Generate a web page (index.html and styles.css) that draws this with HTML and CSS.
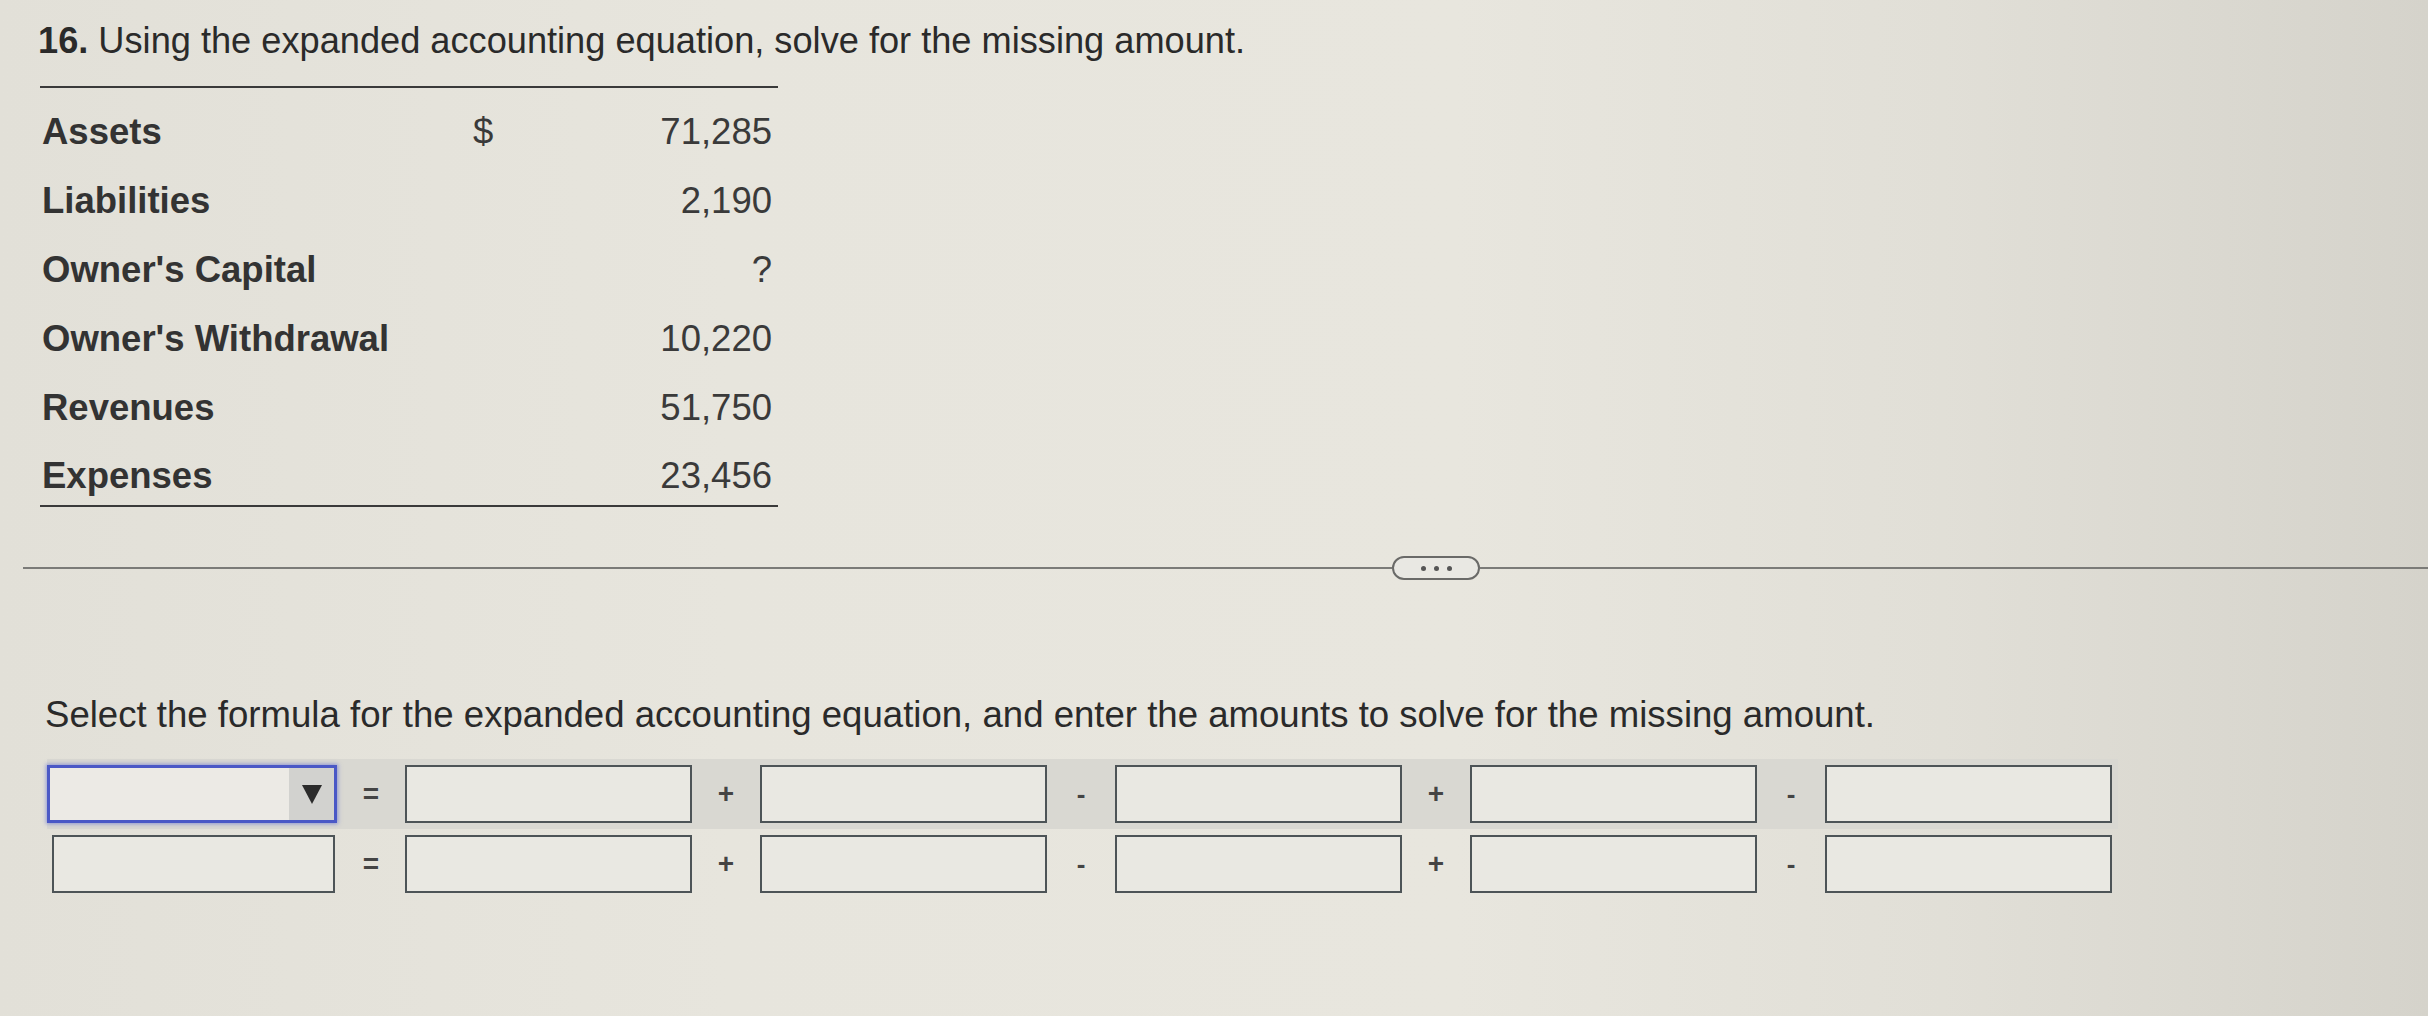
FILE: index.html
```html
<!DOCTYPE html>
<html lang="en">
<head>
<meta charset="utf-8">
<title>Expanded accounting equation</title>
<link rel="stylesheet" href="styles.css">
</head>
<body>
<div class="page">
  <h1 class="title"><b>16.</b> Using the expanded accounting equation, solve for the missing amount.</h1>

  <div class="data">
    <div class="row"><span class="label">Assets</span><span class="cur">$</span><span class="val">71,285</span></div>
    <div class="row"><span class="label">Liabilities</span><span class="cur"></span><span class="val">2,190</span></div>
    <div class="row"><span class="label">Owner's Capital</span><span class="cur"></span><span class="val">?</span></div>
    <div class="row"><span class="label">Owner's Withdrawal</span><span class="cur"></span><span class="val">10,220</span></div>
    <div class="row"><span class="label">Revenues</span><span class="cur"></span><span class="val">51,750</span></div>
    <div class="row last"><span class="label">Expenses</span><span class="cur"></span><span class="val">23,456</span></div>
  </div>

  <div class="sep">
    <span class="sep-line short"></span>
    <span class="more"><i></i><i></i><i></i></span>
    <span class="sep-line"></span>
  </div>

  <p class="instr">Select the formula for the expanded accounting equation, and enter the amounts to solve for the missing amount.</p>

  <div class="formula">
    <div class="frow band">
      <div class="select"><span class="sel-field"></span><span class="sel-btn"><span class="tri"></span></span></div>
      <span class="op">=</span>
      <span class="box"></span>
      <span class="op">+</span>
      <span class="box"></span>
      <span class="op dash">-</span>
      <span class="box"></span>
      <span class="op">+</span>
      <span class="box"></span>
      <span class="op dash">-</span>
      <span class="box"></span>
    </div>
    <div class="frow">
      <span class="box first"></span>
      <span class="op">=</span>
      <span class="box"></span>
      <span class="op">+</span>
      <span class="box"></span>
      <span class="op dash">-</span>
      <span class="box"></span>
      <span class="op">+</span>
      <span class="box"></span>
      <span class="op dash">-</span>
      <span class="box"></span>
    </div>
  </div>
</div>
</body>
</html>
```

FILE: styles.css
```css
html, body {
  margin: 0;
  padding: 0;
}

body {
  width: 2428px;
  height: 1016px;
  overflow: hidden;
  background: linear-gradient(90deg, #e2e0d8 0%, #e7e5dd 30%, #e8e6de 60%, #e1dfd7 80%, #d5d3cb 100%);
  font-family: "Liberation Sans", Arial, sans-serif;
  color: #2c2c2c;
}

.page {
  padding-top: 21px;
}

.title {
  margin: 0 0 0 38px;
  font-size: 36.2px;
  line-height: 40px;
  font-weight: normal;
  color: #2a2a2a;
}

.title b {
  font-weight: bold;
}

.data {
  margin: 25px 0 0 40px;
  width: 738px;
  box-sizing: border-box;
  border-top: 2px solid #3a3a3a;
  border-bottom: 2px solid #3a3a3a;
  padding: 9px 6px 0 2px;
}

.row {
  display: grid;
  grid-template-columns: 431px 40px 1fr;
  height: 69px;
  align-items: center;
  font-size: 36.5px;
  line-height: 40px;
}

.row.last {
  height: 63px;
  align-items: start;
  padding-top: 14px;
  box-sizing: border-box;
}

.label {
  font-weight: bold;
  color: #333;
}

.cur {
  color: #3a3a3a;
}

.val {
  text-align: right;
  color: #3a3a3a;
}

.sep {
  display: flex;
  align-items: center;
  margin: 49px 0 0 23px;
  height: 24px;
}

.sep-line {
  flex: 1;
  height: 2px;
  background: #7b7b78;
}

.sep-line.short {
  flex: 0 0 1369px;
}

.more {
  width: 88px;
  height: 24px;
  box-sizing: border-box;
  border: 2.5px solid #6a6a68;
  border-radius: 12px;
  background: #e9e8e3;
  display: flex;
  align-items: center;
  justify-content: center;
  gap: 8px;
}

.more i {
  display: block;
  width: 5px;
  height: 5px;
  border-radius: 50%;
  background: #555;
}

.instr {
  margin: 115px 0 0 45px;
  font-size: 36.6px;
  line-height: 40px;
  color: #2a2a2a;
}

.formula {
  margin: 24px 0 0 47px;
  display: flex;
  flex-direction: column;
  gap: 6px;
}

.frow {
  display: grid;
  grid-template-columns: 290px 68px 287px 68px 287px 68px 287px 68px 287px 68px 287px;
  align-items: center;
  width: 2071px;
  height: 58px;
}

.frow.band {
  background: #d9d8d2;
  padding: 6px 0;
}

.box {
  display: block;
  height: 58px;
  box-sizing: border-box;
  border: 2px solid #4d5457;
  background: #e9e8e2;
}

.box.first {
  margin-left: 5px;
  width: 283px;
}

.op {
  text-align: center;
  font-size: 28px;
  line-height: 30px;
  color: #444;
  font-weight: bold;
}

.op.dash {
  font-size: 26px;
}

.select {
  height: 58px;
  box-sizing: border-box;
  border: 3px solid #4a58c6;
  box-shadow: 0 0 4px 1px rgba(80, 95, 210, 0.55);
  display: flex;
  background: #eceae5;
}

.sel-field {
  flex: 1;
}

.sel-btn {
  width: 45px;
  background: #d2d2cf;
  display: flex;
  align-items: center;
  justify-content: center;
}

.tri {
  width: 0;
  height: 0;
  border-left: 10px solid transparent;
  border-right: 10px solid transparent;
  border-top: 19px solid #2b2b2b;
}
```
